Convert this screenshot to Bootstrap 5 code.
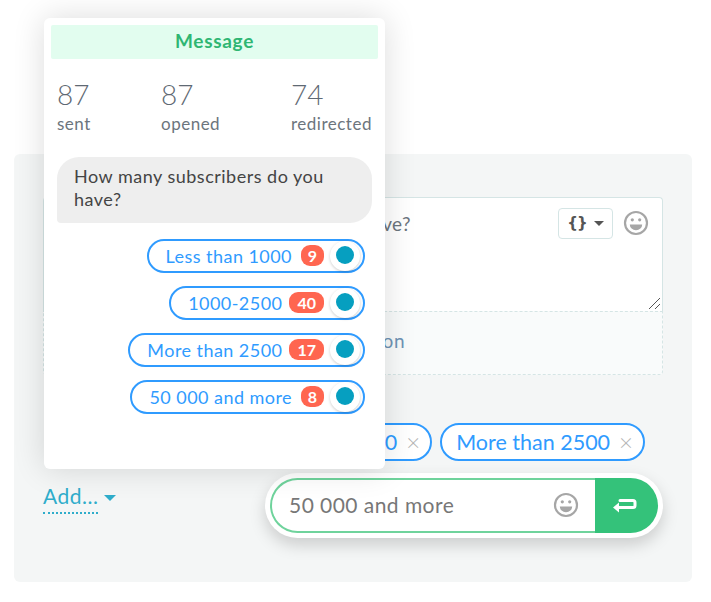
<!DOCTYPE html>
<html lang="en"><head><meta charset="utf-8"><title>Message</title>
<link href="https://cdn.jsdelivr.net/npm/bootstrap@5.3.0/dist/css/bootstrap.min.css" rel="stylesheet">
<style>
html,body{background:#fff;height:602px;overflow:hidden}
body{font-family:"Lato","Noto Sans",sans-serif;font-size:17px;position:relative}
.stage{padding:154px 19px 20px 14px}
.panel-q{background:#f4f6f6;border-radius:6px;height:428px;padding:43px 29px 0 29px;position:relative}
.ta-box{height:114px;background:#fff;border:1px solid #d5e5e5;border-bottom:0;border-radius:4px 4px 0 0;padding:10px 13px 0 52px;color:#6c757d;font-size:19px;letter-spacing:.4px;position:relative}
.ta-text{flex:1;line-height:26px;white-space:nowrap;margin-top:3px}
.var-btn{width:55px;height:31px;background:#fff;border:1px solid #d5e5e5;border-radius:4px;color:#555;gap:7px;letter-spacing:0}
.brace-q{font-family:"DejaVu Sans",sans-serif;font-weight:700;font-size:15px;letter-spacing:-1px}
.caret-d{width:0;height:0;border-left:5px solid transparent;border-right:5px solid transparent;border-top:5px solid currentColor}
.grip{position:absolute;right:1px;bottom:1px}
.smile-a{margin-top:2px;margin-left:10px}
.add-btn-box{height:64px;border:1px dashed #d5e5e5;border-radius:0 0 4px 4px;background:#f9fbfb;color:#6f93b5;font-size:19px;letter-spacing:.5px;padding:0 0 3px 261px}
.chips{margin-top:48px;gap:8px;height:38px;padding-right:18px}
.chip-q{height:38px;border:2px solid #2f9bff;border-radius:19px;background:#fff;color:#2f9bff;font-size:21.5px;padding:0 10px 0 14px;gap:9px;white-space:nowrap}
.chip-q .x{color:#b3b3b3;font-size:24px;line-height:1;font-weight:300}
.add-row{margin-top:12px;align-items:flex-start}
.add-link{color:#2fadcb;font-size:21px;letter-spacing:.5px;border-bottom:2px dotted #2fadcb;line-height:26px;padding-bottom:3px;margin-top:10px;text-decoration:none}
.add-caret{color:#2fadcb;margin-left:6px;margin-top:22px;border-left-width:6px;border-right-width:6px;border-top-width:6px}
.send-wrap{width:398px;height:65px;margin-left:auto;border-radius:33px;background:#fff;padding:5px;box-shadow:0 7px 16px rgba(0,0,0,.17)}
.send-input{flex:1;border:2px solid #6fd39c;border-right:0;border-radius:28px 0 0 28px;color:#777;font-size:21px;letter-spacing:.45px;padding:0 16px 2px 17px}
.send-go{width:63px;background:#34c27a;border-radius:0 28px 28px 0;padding-right:4px}
.pop-q{position:absolute;left:44px;top:18px;width:341px;height:451px;background:#fff;border-radius:6px;padding:7px 7px 0;box-shadow:0 0 32px rgba(0,0,0,.14);z-index:2}
.pop-head{height:34px;background:#e2fdef;border-radius:2px;color:#2fb673;font-weight:700;font-size:19px;letter-spacing:.7px;padding-bottom:2px}
.stats-q{margin-top:18px;padding-left:6px;color:#6c757d}
.stat-q b{display:block;font-weight:300;font-size:28px;line-height:34px;color:#5f6973}
.stat-q span{display:block;font-size:17px;letter-spacing:.5px;line-height:24px;margin-top:1px;color:#6c757d}
.s1{width:104px}.s2{width:130px}
.bubble-q{margin:21px 6px 0;width:315px;height:66px;background:#eee;border-radius:22px 22px 22px 4px;padding:8px 30px 8px 17px;color:#444;font-size:18px;letter-spacing:.5px;line-height:23px}
.opts{margin-top:16px;padding-right:13px;gap:13px;align-items:flex-end}
.opt-q{height:34px;border:2px solid #2f9bff;border-radius:17px;color:#2f9bff;font-size:18px;letter-spacing:.45px;padding:0 3px 0 17px;white-space:nowrap;background:#fff}
.cnt{background:#ff6650;color:#fff;font-weight:700;border-radius:9px;min-width:23px;height:21px;font-size:16px;line-height:21px;letter-spacing:0;text-align:center;padding:0 8px;margin-left:7px;margin-top:-1px}
.cnt-one{padding:0 5px;margin-left:9px}
.knob{width:30px;height:30px;border-radius:50%;background:#fff;box-shadow:0 1px 3px rgba(0,0,0,.2);margin-left:6px;flex:none}
.knob i{width:18px;height:18px;border-radius:50%;background:#069fc0;display:block;margin-top:-3px}
</style></head>
<body>
<div class="stage">
 <div class="panel-q">
  <div class="ta-box d-flex align-items-start">
   <div class="ta-text">How many subscribers do you have?</div>
   <div class="var-btn d-flex align-items-center justify-content-center"><span class="brace-q">{}</span><span class="caret-d"></span></div>
   <svg class="smile-a" width="26" height="26" viewBox="0 0 26 26" fill="none" stroke="#a6a6a6" stroke-width="2.2"><circle cx="13" cy="13" r="11"/><circle cx="9.3" cy="9.8" r="1.6" fill="#a6a6a6" stroke="none"/><circle cx="16.7" cy="9.8" r="1.6" fill="#a6a6a6" stroke="none"/><path d="M6.8 14.5h12.4a6.2 5.8 0 0 1-12.4 0z" fill="#a6a6a6" stroke="none"/></svg>
   <svg class="grip" width="13" height="13" viewBox="0 0 13 13" stroke="#555" fill="none"><path d="M1 12 12 1M7 12l5-5"/></svg>
  </div>
  <div class="add-btn-box d-flex align-items-center">Add button</div>
  <div class="chips d-flex justify-content-end">
   <div class="chip-q d-flex align-items-center">Less than 1000<span class="x">×</span></div>
   <div class="chip-q d-flex align-items-center">1000-2500<span class="x">×</span></div>
   <div class="chip-q d-flex align-items-center">More than 2500<span class="x">×</span></div>
  </div>
  <div class="add-row d-flex">
   <a class="add-link" href="#">Add...</a><span class="caret-d add-caret"></span>
   <div class="send-wrap d-flex">
    <div class="send-input d-flex align-items-center justify-content-between bg-white"><span>50 000 and more</span>
     <svg width="26" height="26" viewBox="0 0 26 26" fill="none" stroke="#a6a6a6" stroke-width="2.2"><circle cx="13" cy="13" r="11"/><circle cx="9.3" cy="9.8" r="1.6" fill="#a6a6a6" stroke="none"/><circle cx="16.7" cy="9.8" r="1.6" fill="#a6a6a6" stroke="none"/><path d="M6.8 14.5h12.4a6.2 5.8 0 0 1-12.4 0z" fill="#a6a6a6" stroke="none"/></svg></div>
    <div class="send-go d-flex align-items-center justify-content-center"><svg width="24" height="16" viewBox="0 0 24 16"><path d="M7 2.5h13a2 2 0 0 1 2 2v3a2 2 0 0 1-2 2H4" fill="none" stroke="#fff" stroke-width="3" stroke-linecap="round"/><path d="M0 9.5 6 4.5v10z" fill="#fff"/></svg></div>
   </div>
  </div>
 </div>
</div>
<div class="pop-q">
 <div class="pop-head d-flex align-items-center justify-content-center">Message</div>
 <div class="stats-q d-flex">
  <div class="stat-q s1"><b>87</b><span>sent</span></div>
  <div class="stat-q s2"><b>87</b><span>opened</span></div>
  <div class="stat-q"><b>74</b><span>redirected</span></div>
 </div>
 <div class="bubble-q">How many subscribers do you have?</div>
 <div class="opts d-flex flex-column">
  <div class="opt-q d-flex align-items-center">Less than 1000<span class="cnt cnt-one">9</span><span class="knob d-flex align-items-center justify-content-center"><i></i></span></div>
  <div class="opt-q d-flex align-items-center">1000-2500<span class="cnt">40</span><span class="knob d-flex align-items-center justify-content-center"><i></i></span></div>
  <div class="opt-q d-flex align-items-center">More than 2500<span class="cnt">17</span><span class="knob d-flex align-items-center justify-content-center"><i></i></span></div>
  <div class="opt-q d-flex align-items-center">50 000 and more<span class="cnt cnt-one">8</span><span class="knob d-flex align-items-center justify-content-center"><i></i></span></div>
 </div>
</div>
<script src="https://cdn.jsdelivr.net/npm/bootstrap@5.3.0/dist/js/bootstrap.bundle.min.js"></script>
</body></html>
